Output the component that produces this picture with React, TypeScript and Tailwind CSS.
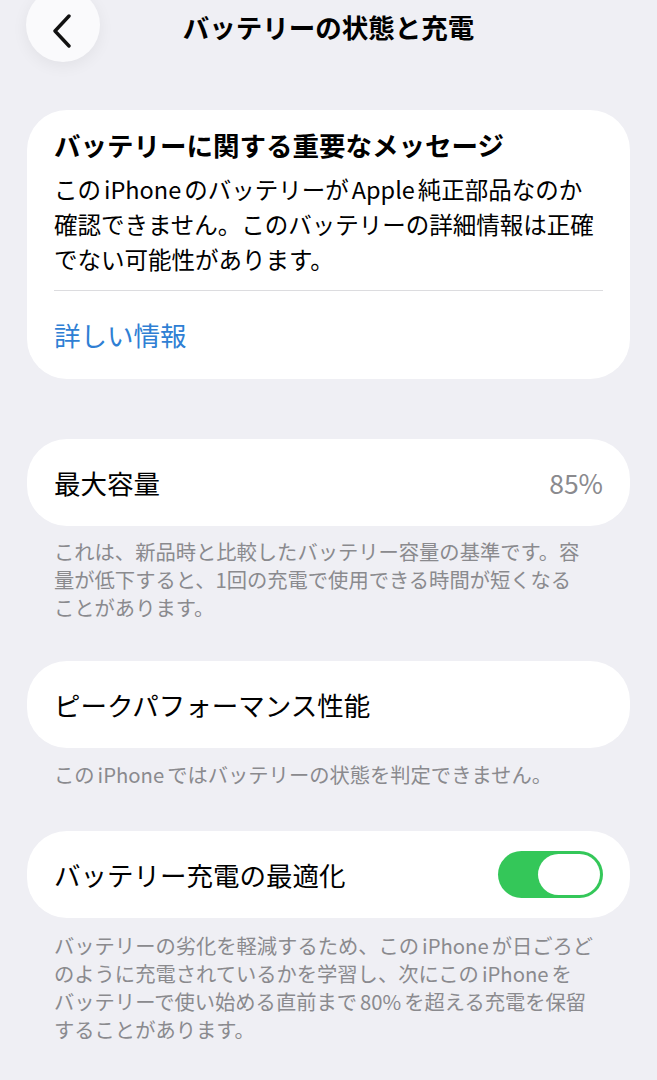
import React from 'react';

const font = { fontFamily: '"Noto Sans CJK JP", "Noto Sans", sans-serif' };

// latin words get a little air around them, like iOS does
function L({ children }: { children: React.ReactNode }) {
    return <span className="mx-[3px]">{children}</span>;
}

function Toggle() {
    return (
        <div className="w-[105px] h-[47px] rounded-full bg-[#34c759] flex items-center justify-end pr-[3px]">
            <div className="w-[62px] h-[41px] rounded-full bg-white" />
        </div>
    );
}

function Row({ label, children }: { label: string; children?: React.ReactNode }) {
    return (
        <div className="bg-white rounded-[40px] h-[87px] px-[27px] flex items-center justify-between">
            <span className="text-[26.5px] leading-[34px] text-black">{label}</span>
            {children}
        </div>
    );
}

function Footnote({ lines }: { lines: React.ReactNode[] }) {
    return (
        <p className="px-[27px] text-[20.3px] leading-[28px] text-[#8a8a8e]">
            {lines.map((l, i) => (
                <span key={i} className="block whitespace-nowrap">{l}</span>
            ))}
        </p>
    );
}

export default function App() {
    return (
        <div className="min-h-[1080px] bg-[#efeff4] px-[27px] overflow-hidden" style={font}>
            {/* nav */}
            <div className="grid grid-cols-[1fr_auto_1fr] h-[62px] -mx-[27px] px-[26px]">
                <div className="flex items-start">
                    <div className="w-[74px] h-[74px] -mt-[12px] rounded-full bg-[#fafafc] shadow-[0_4px_16px_rgba(0,0,0,0.06)] flex items-center justify-center">
                        <svg width="24" height="34" viewBox="0 0 24 34" className="mt-[12px] -ml-[3px]">
                            <path d="M19 2 L5 17 L19 32" fill="none" stroke="#111" strokeWidth="3.4" strokeLinecap="round" strokeLinejoin="round" />
                        </svg>
                    </div>
                </div>
                <h1 className="mt-[10px] text-[26.5px] leading-[34px] font-semibold text-black">
                    バッテリーの状態と充電
                </h1>
                <div />
            </div>

            {/* important message */}
            <div className="mt-[48px] bg-white rounded-[40px] px-[27px] pt-[18px] pb-[27px]">
                <h2 className="text-[26.5px] leading-[34px] font-bold text-black whitespace-nowrap">
                    バッテリーに関する重要なメッセージ
                </h2>
                <p className="mt-[10px] text-[23.5px] leading-[35px] text-black">
                    <span className="block whitespace-nowrap">この<L>iPhone</L>のバッテリーが<L>Apple</L>純正部品なのか</span>
                    <span className="block whitespace-nowrap">確認できません。このバッテリーの詳細情報は正確</span>
                    <span className="block whitespace-nowrap">でない可能性があります。</span>
                </p>
                <div className="mt-[13px] h-px bg-[#dcdcdf]" />
                <div className="mt-[27px] text-[26.5px] leading-[34px] text-[#2f7fd4]">詳しい情報</div>
            </div>

            {/* max capacity */}
            <div className="mt-[60px]">
                <Row label="最大容量">
                    <span className="text-[26.5px] leading-[34px] text-[#8a8a8e]">85%</span>
                </Row>
            </div>
            <div className="mt-[11px]">
                <Footnote
                    lines={[
                        'これは、新品時と比較したバッテリー容量の基準です。容',
                        '量が低下すると、1回の充電で使用できる時間が短くなる',
                        'ことがあります。',
                    ]}
                />
            </div>

            {/* peak performance */}
            <div className="mt-[40px]">
                <Row label="ピークパフォーマンス性能" />
            </div>
            <div className="mt-[12px]">
                <Footnote lines={[<>この<L>iPhone</L>ではバッテリーの状態を判定できません。</>]} />
            </div>

            {/* optimized charging */}
            <div className="mt-[43px]">
                <Row label="バッテリー充電の最適化">
                    <Toggle />
                </Row>
            </div>
            <div className="mt-[13px]">
                <Footnote
                    lines={[
                        <>バッテリーの劣化を軽減するため、この<L>iPhone</L>が日ごろど</>,
                        <>のように充電されているかを学習し、次にこの<L>iPhone</L>を</>,
                        <>バッテリーで使い始める直前まで<L>80%</L>を超える充電を保留</>,
                        'することがあります。',
                    ]}
                />
            </div>
        </div>
    );
}
